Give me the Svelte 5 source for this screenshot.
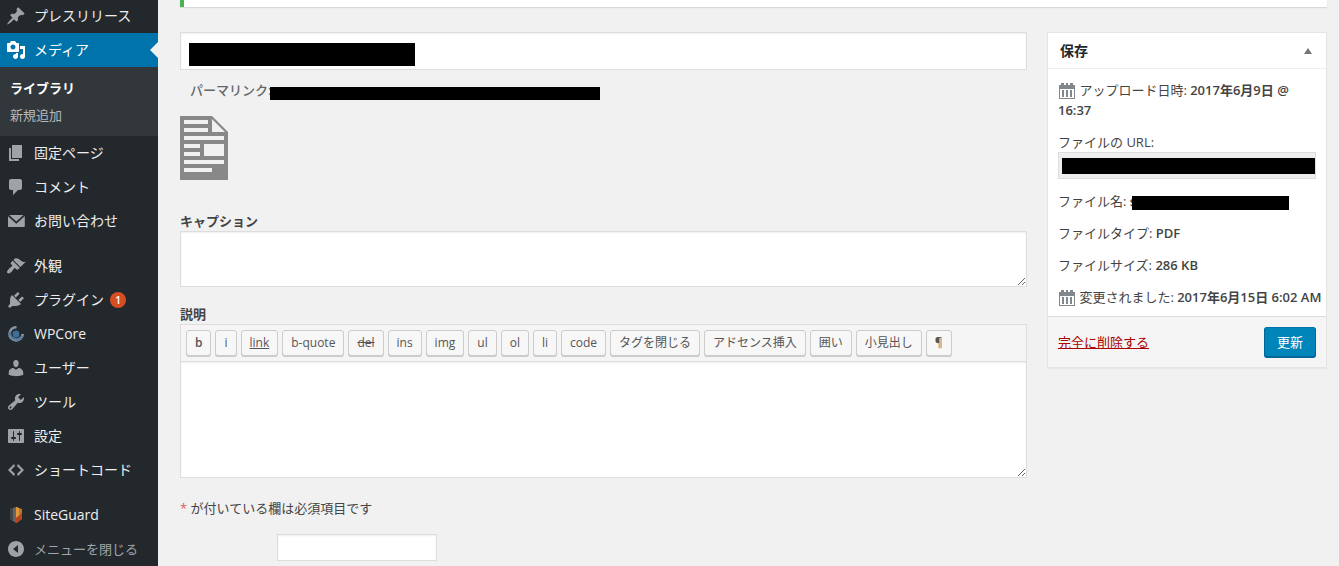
<script lang="ts">
  const menu = [
    { name: 'プレスリリース', icon: 'post' },
    { name: 'メディア', icon: 'media', current: true, children: ['ライブラリ', '新規追加'] },
    { name: '固定ページ', icon: 'page' },
    { name: 'コメント', icon: 'comments' },
    { name: 'お問い合わせ', icon: 'mail' },
    { name: '外観', icon: 'appearance', separated: true },
    { name: 'プラグイン', icon: 'plugins', count: 1 },
    { name: 'WPCore', icon: 'wpcore' },
    { name: 'ユーザー', icon: 'users' },
    { name: 'ツール', icon: 'tools' },
    { name: '設定', icon: 'settings' },
    { name: 'ショートコード', icon: 'code' },
    { name: 'SiteGuard', icon: 'siteguard', separated: true },
  ]

  const paths: Record<string, string> = {
    post: 'M10.44 3.02l1.82-1.82 6.36 6.35-1.83 1.82c-1.05-.68-2.48-.57-3.41.36l-.75.75c-.92.93-1.04 2.35-.35 3.41l-1.83 1.82-2.41-2.41-2.8 2.79c-.42.42-3.38 2.71-3.8 2.29s1.86-3.39 2.28-3.81l2.79-2.79L4.1 9.36l1.83-1.82c1.05.69 2.48.57 3.4-.36l.75-.75c.93-.92 1.05-2.35.36-3.41z',
    media: 'M13 11V4c0-.55-.45-1-1-1h-1.67L9 1H5L3.67 3H2c-.55 0-1 .45-1 1v7c0 .55.45 1 1 1h10c.55 0 1-.45 1-1zM7 4.5c1.38 0 2.5 1.12 2.5 2.5S8.38 9.5 7 9.5 4.5 8.38 4.5 7 5.62 4.5 7 4.5zM14 6h5v10.5c0 1.38-1.12 2.5-2.5 2.5S14 17.88 14 16.5s1.12-2.5 2.5-2.5c.17 0 .34.02.5.05V9h-3V6zm-4 8.05V13h2v3.5c0 1.38-1.12 2.5-2.5 2.5S7 17.88 7 16.5 8.12 14 9.5 14c.17 0 .34.02.5.05z',
    page: 'M6 15V2h10v13H6zm-1 1h8v2H3V5h2v11z',
    comments: 'M5 2h9c1.1 0 2 .9 2 2v7c0 1.1-.9 2-2 2h-2l-5 5v-5H5c-1.1 0-2-.9-2-2V4c0-1.1.9-2 2-2z',
    mail: 'M3.1 4h14.4L10.3 10.6zM2 5.2l5.2 4.9 3.1 2.6 3.1-2.6L18.8 5v10c0 .6-.4 1-1 1H3c-.6 0-1-.4-1-1z',
    appearance: 'M14.48 11.06L7.41 3.99l1.5-1.5c.5-.56 2.3-.47 3.51.32 1.21.8 1.43 1.28 2.91 2.1 1.18.64 2.45 1.26 4.45.85zm-.71.71L6.7 4.7 4.93 6.47c-.39.39-.39 1.02 0 1.41l1.06 1.06c.39.39.39 1.03 0 1.42-.6.6-1.43 1.11-2.21 1.69-.35.26-.7.53-1.01.84C1.43 14.23.4 16.08 1.4 17.07c.99 1 2.84-.03 4.18-1.36.31-.31.58-.66.85-1.02.57-.78 1.08-1.61 1.69-2.21.39-.39 1.02-.39 1.41 0l1.06 1.06c.39.39 1.02.39 1.41 0z',
    plugins: 'M13.11 4.36L9.87 7.6 8 5.73l3.24-3.24c.35-.34 1.05-.2 1.56.32.52.51.66 1.21.31 1.55zm-8 1.77l.91-1.12 9.01 9.01-1.19.84c-.71.71-2.63 1.16-3.82 1.16H6.14L4.9 17.26c-.59.59-1.54.59-2.12 0-.59-.58-.59-1.53 0-2.12l1.24-1.24v-3.88c0-1.13.4-3.19 1.09-3.89zm7.26 3.97l3.24-3.24c.34-.35 1.04-.21 1.55.31.52.51.66 1.21.31 1.55l-3.24 3.25z',
    users: 'M10 9.25c-2.27 0-2.73-3.44-2.73-3.44C7 4.02 7.82 2 9.97 2c2.16 0 2.98 2.02 2.71 3.81 0 0-.41 3.44-2.68 3.44zm0 2.57L12.72 10c2.39 0 4.52 2.33 4.52 4.53v2.49s-3.65 1.13-7.24 1.13c-3.65 0-7.24-1.13-7.24-1.13v-2.49c0-2.25 1.94-4.48 4.47-4.48z',
    tools: 'M16.68 9.77c-1.34 1.34-3.3 1.67-4.95.99l-5.41 6.52c-.99.99-2.59.99-3.58 0s-.99-2.59 0-3.57l6.52-5.42c-.68-1.65-.35-3.61.99-4.95 1.28-1.28 3.12-1.62 4.72-1.06l-2.89 2.89 2.82 2.82 2.86-2.87c.53 1.58.18 3.39-1.08 4.65zM3.81 16.21c.4.39 1.04.39 1.43 0 .4-.4.4-1.04 0-1.43-.39-.4-1.03-.4-1.43 0-.39.39-.39 1.03 0 1.43z',
    settings: 'M18 16V4c0-.55-.45-1-1-1H3c-.55 0-1 .45-1 1v12c0 .55.45 1 1 1h14c.55 0 1-.45 1-1zM8 11h1c.55 0 1 .45 1 1s-.45 1-1 1H8v1.5c0 .28-.22.5-.5.5s-.5-.22-.5-.5V13H6c-.55 0-1-.45-1-1s.45-1 1-1h1V5.5c0-.28.22-.5.5-.5s.5.22.5.5V11zm5-2h-1c-.55 0-1-.45-1-1s.45-1 1-1h1V5.5c0-.28.22-.5.5-.5s.5.22.5.5V7h1c.55 0 1 .45 1 1s-.45 1-1 1h-1v5.5c0 .28-.22.5-.5.5s-.5-.22-.5-.5V9z',
    code: 'M9 6l-4 4 4 4-1 2-6-6 6-6zm2 8l4-4-4-4 1-2 6 6-6 6z',
    collapse: 'M10 2c4.42 0 8 3.58 8 8s-3.58 8-8 8-8-3.58-8-8 3.58-8 8-8zm2 12V6l-5 4z',
    calendar: 'M2 4h2V2h3v2h2V2h2v2h2V2h3v2h2v14H2zM3 8v9h14V8zM5 9h2v7H5zM9 9h2v7H9zM13 9h2v7h-2z',
  }

  const quicktags = ['b', 'i', 'link', 'b-quote', 'del', 'ins', 'img', 'ul', 'ol', 'li', 'code',
    'タグを閉じる', 'アドセンス挿入', '囲い', '小見出し', '¶']

  let title = $state('')
  let caption = $state('')
  let content = $state('')
  let extra = $state('')
  let open = $state(true)
</script>

{#snippet icon(name: string)}
  <svg class="icon" viewBox="0 0 20 20" width="20" height="20" aria-hidden="true">
    {#if name === 'wpcore'}
      <path d="M10.5 3.2A6.6 6.6 0 1 0 16.7 10" fill="none" stroke="#8499ab" stroke-width="2.6" />
      <path d="M4 8a6.6 6.6 0 0 0 12.3 4" fill="none" stroke="#56789a" stroke-width="2.6" />
      <circle cx="10" cy="10" r="3.4" fill="#3f6f98" />
    {:else if name === 'siteguard'}
      <path d="M10 2L4 4v10l6 4z" fill="#666" />
      <path d="M4 4l3-1v13l-3-2z" fill="#444" />
      <path d="M10 2l6 2v10l-6 4z" fill="#c8722c" />
      <path d="M10 2l3 1v13l-3 2z" fill="#df9a3c" />
      <path d="M10 13l6-5v6l-6 4z" fill="#b5441f" />
    {:else}
      <path d={paths[name]} fill-rule="evenodd" />
    {/if}
  </svg>
{/snippet}

<div class="admin">
  <nav class="menu">
    <ul>
      {#each menu as item}
        <li class:separated={item.separated}>
          <a href="#{item.icon}" class="item" class:current={item.current}>
            {@render icon(item.icon)}
            <span>{item.name}</span>
            {#if item.count}<span class="count">{item.count}</span>{/if}
          </a>
          {#if item.children}
            <ul class="submenu">
              {#each item.children as child, i}
                <li><a href="#{item.icon}-{i}" class:selected={i === 0}>{child}</a></li>
              {/each}
            </ul>
          {/if}
        </li>
      {/each}
    </ul>
    <button class="item collapse">{@render icon('collapse')}<span>メニューを閉じる</span></button>
  </nav>

  <main>
    <div class="notice"></div>

    <div class="columns">
      <div class="editor">
        <div class="title">
          <input type="text" aria-label="タイトル" bind:value={title} />
          <span class="mask"></span>
        </div>

        <div class="permalink">
          <strong>パーマリンク:</strong>
          <span class="mask"></span>
        </div>

        <svg class="document" viewBox="0 0 48 64" width="48" height="64" aria-hidden="true">
          <path fill="#888" d="M0 0h32l16 16v48H0z" />
          <path fill="#f1f1f1" d="M4 4h24v4H4zM4 12h24v4H4zM32 3l13 13H32zM4 20h40v4H4zM4 28h16v4H4zM24 28h20v12H24zM4 36h16v4H4zM4 44h40v4H4zM4 52h28v4H4z" />
        </svg>

        <label class="heading" for="caption">キャプション</label>
        <textarea id="caption" class="caption" bind:value={caption}></textarea>

        <label class="heading" for="content">説明</label>
        <div class="quicktags">
          {#each quicktags as tag}
            <button class={tag}>{tag}</button>
          {/each}
        </div>
        <textarea id="content" class="content" bind:value={content}></textarea>

        <p class="required"><span>*</span> が付いている欄は必須項目です</p>
        <input class="extra" type="text" aria-label="追加項目" bind:value={extra} />
      </div>

      <aside class="postbox">
        <header>
          <h2>保存</h2>
          <button class="toggle" aria-label="パネルを切り替え" aria-expanded={open} onclick={() => (open = !open)}>
            <svg viewBox="0 0 8 6" width="8" height="6"><path d="M4 0l4 6H0z" /></svg>
          </button>
        </header>
        {#if open}
          <div class="details">
            <div class="row">{@render icon('calendar')} アップロード日時: <b>2017年6月9日 @</b> <b>16:37</b></div>
            <div class="row url">
              <label for="url">ファイルの URL:</label>
              <input id="url" type="text" readonly />
              <span class="mask"></span>
            </div>
            <div class="row">ファイル名: <b>s</b><span class="mask name"></span></div>
            <div class="row">ファイルタイプ: <b>PDF</b></div>
            <div class="row">ファイルサイズ: <b>286 KB</b></div>
            <div class="row modified">{@render icon('calendar')} 変更されました: <b>2017年6月15日 6:02 AM</b></div>
          </div>
          <footer>
            <a href="#delete">完全に削除する</a>
            <button class="update">更新</button>
          </footer>
        {/if}
      </aside>
    </div>
  </main>
</div>

<style>
  :global(body) {
    background: #f1f1f1;
    overflow: hidden;
  }

  .admin {
    display: flex;
    min-height: 100vh;
    font: 13px/20px "Open Sans", "Noto Sans CJK JP", sans-serif;
    color: #444;
  }

  input, textarea, button {
    box-sizing: border-box;
    font: inherit;
    color: inherit;
    margin: 0;
  }

  ul {
    list-style: none;
    margin: 0;
    padding: 0;
  }

  .icon {
    flex: none;
    fill: #9ea3a8;
  }

  .mask {
    background: #000;
  }

  /* admin menu */
  .menu {
    flex: none;
    width: 158px;
    background: #23282d;
  }

  .menu > ul {
    margin-top: -1px;
  }

  .item {
    position: relative;
    display: flex;
    align-items: center;
    gap: 8px;
    box-sizing: border-box;
    width: 100%;
    height: 34px;
    padding: 0 6px;
    border: 0;
    background: none;
    font-size: 14px;
    color: #eee;
    text-decoration: none;
    white-space: nowrap;
    cursor: pointer;
  }

  .separated {
    margin-top: 11px;
  }

  .current {
    background: #0073aa;
    color: #fff;
  }

  .current .icon {
    fill: #fff;
  }

  .current::after {
    content: "";
    position: absolute;
    right: 0;
    border: 8px solid transparent;
    border-right-color: #f1f1f1;
  }

  .count {
    min-width: 16px;
    margin-left: -2px;
    border-radius: 8px;
    background: #d54e21;
    color: #fff;
    font-size: 10px;
    font-weight: 600;
    line-height: 16px;
    text-align: center;
  }

  .submenu {
    padding: 8px 0 7px;
    background: #32373c;
  }

  .submenu a {
    display: block;
    padding: 3px 10px 4px;
    color: #b4b9be;
    text-decoration: none;
  }

  .submenu .selected {
    color: #fff;
    font-weight: 600;
  }

  .collapse {
    color: #a0a5aa;
    font-size: 13px;
  }

  /* page */
  main {
    flex: 1;
    min-width: 0;
    padding: 0 12px 0 22px;
  }

  .notice {
    height: 7px;
    border-left: 4px solid #46b450;
    background: #fff;
    box-shadow: 0 1px 1px rgba(0, 0, 0, 0.1);
  }

  .columns {
    display: flex;
    align-items: flex-start;
    gap: 20px;
    margin-top: 25px;
  }

  .editor {
    flex: 1;
    min-width: 0;
  }

  .editor input, .editor textarea {
    display: block;
    width: 100%;
    border: 1px solid #ddd;
    background: #fff;
    box-shadow: inset 0 1px 2px rgba(0, 0, 0, 0.07);
  }

  .title {
    position: relative;
  }

  .title input {
    height: 38px;
    padding: 3px 8px;
    font-size: 20px;
  }

  .title .mask {
    position: absolute;
    left: 9px;
    top: 11px;
    width: 226px;
    height: 23px;
  }

  .permalink {
    display: flex;
    align-items: center;
    padding: 10px 10px 0;
    color: #666;
  }

  .permalink strong {
    font-weight: 500;
  }

  .permalink .mask {
    width: 330px;
    height: 13px;
    margin: 6px 0 0 -1px;
  }

  .document {
    display: block;
    margin: 16px 0 32px;
  }

  .heading {
    display: block;
    font-weight: 600;
    line-height: 19px;
  }

  .editor .caption {
    height: 56px;
    margin-bottom: 18px;
  }

  .quicktags {
    display: flex;
    flex-wrap: wrap;
    gap: 4px;
    padding: 5px;
    border: 1px solid #ddd;
    border-bottom: 0;
    background: #f5f5f5;
  }

  .quicktags button {
    height: 26px;
    padding: 0 8px;
    border: 1px solid #ccc;
    border-radius: 3px;
    background: #f7f7f7;
    box-shadow: 0 1px 0 #ccc;
    font-size: 12px;
    line-height: 24px;
    color: #555;
  }

  .quicktags .b {
    font-weight: 600;
  }

  .quicktags .link {
    text-decoration: underline;
  }

  .quicktags .del {
    text-decoration: line-through;
  }

  .editor .content {
    height: 117px;
  }

  .required {
    margin: 20px 0 16px;
  }

  .required span {
    color: #e05c5c;
  }

  .editor .extra {
    width: 160px;
    height: 27px;
    margin-left: 97px;
  }

  /* save box */
  .postbox {
    flex: none;
    box-sizing: border-box;
    width: 280px;
    border: 1px solid #e5e5e5;
    background: #fff;
    box-shadow: 0 1px 1px rgba(0, 0, 0, 0.04);
  }

  header {
    display: flex;
    align-items: center;
    justify-content: space-between;
    height: 35px;
    padding: 0 12px;
    border-bottom: 1px solid #eee;
  }

  h2 {
    margin: 0;
    font-size: 14px;
    font-weight: 600;
    color: #23282d;
  }

  .toggle {
    display: flex;
    padding: 2px;
    border: 0;
    background: none;
    fill: #72777c;
  }

  .details {
    padding: 5px 0 3px;
  }

  .row {
    padding: 6px 10px;
  }

  .row .icon {
    display: inline-block;
    margin: -4px -1px -2px -1px;
    vertical-align: middle;
    fill: #82878c;
  }

  .modified {
    white-space: nowrap;
  }

  b {
    font-weight: 600;
  }

  .url {
    position: relative;
  }

  .url label {
    display: block;
  }

  .url input {
    display: block;
    width: 100%;
    height: 27px;
    border: 1px solid #ddd;
    background: #eee;
  }

  .url .mask {
    position: absolute;
    left: 14px;
    right: 11px;
    bottom: 11px;
    height: 16px;
  }

  .name {
    position: relative;
    display: inline-block;
    width: 157px;
    height: 14px;
    margin-left: -4px;
    vertical-align: middle;
  }

  footer {
    display: flex;
    align-items: center;
    justify-content: space-between;
    padding: 10px;
    border-top: 1px solid #ddd;
    background: #f5f5f5;
  }

  footer a {
    color: #a00;
  }

  .update {
    height: 30px;
    padding: 0 12px;
    border: 1px solid #006799;
    border-top-color: #0073aa;
    border-radius: 3px;
    background: #0085ba;
    box-shadow: 0 1px 0 #006799;
    color: #fff;
  }
</style>
